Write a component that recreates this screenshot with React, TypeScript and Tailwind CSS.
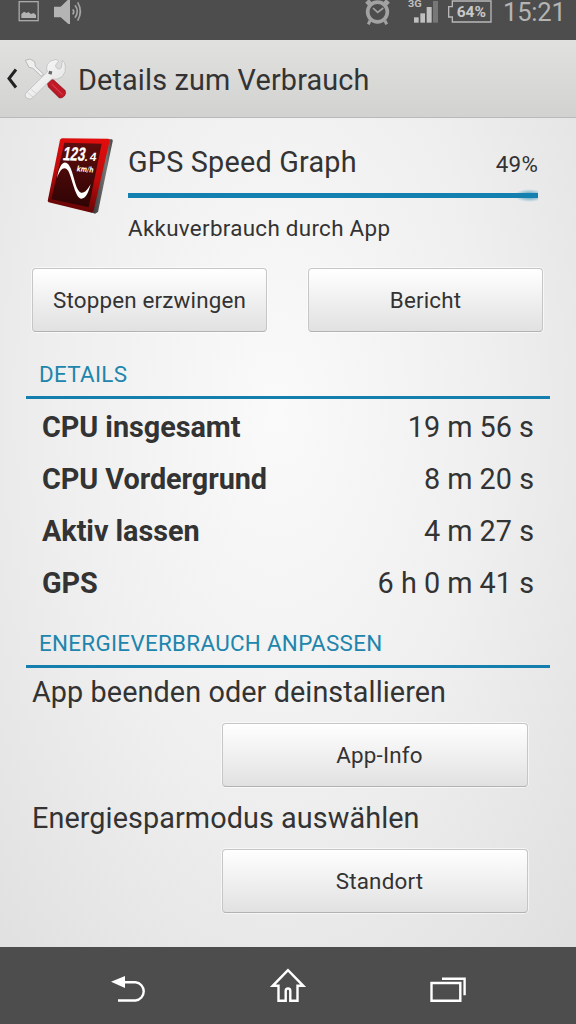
import React from 'react';

const usage = [
  { label: 'CPU insgesamt', value: '19 m 56 s' },
  { label: 'CPU Vordergrund', value: '8 m 20 s' },
  { label: 'Aktiv lassen', value: '4 m 27 s' },
  { label: 'GPS', value: '6 h 0 m 41 s' },
];

const actions = [
  { text: 'App beenden oder deinstallieren', button: 'App-Info' },
  { text: 'Energiesparmodus auswählen', button: 'Standort' },
];

function StatusBar() {
  return (
    <div className="flex h-10 shrink-0 items-start justify-between bg-[#4d4d4d] text-[#b4b4b4]">
      <svg width="100" height="30" viewBox="0 0 300 90">
        <rect x="57.5" y="5" width="57" height="57" fill="none" stroke="#a9a9a9" strokeWidth="4" />
        <path d="M64 54V42l8-7 8 4 5-3 8 6 8-3 7 6v9z" fill="#b4b4b4" />
        <path d="M162 20h20L203 0h7v72h-5l-23-20h-20z" fill="#b4b4b4" />
        <path d="M218 28q7 7 0 15M225 16q14 18 0 37M233 7q16 27 0 55" fill="none" stroke="#a4a4a4" strokeWidth="5" />
      </svg>
      <div className="flex items-start">
        <svg width="140" height="30" viewBox="40 0 420 90">
          <g fill="none" stroke="#a2a2a2">
            <circle cx="83.5" cy="36" r="29.5" strokeWidth="11" />
            <path d="M70 24l14 13 17-13" strokeWidth="5" />
            <path d="M51 13L62 2M116 13L105 2" strokeWidth="13" />
            <path d="M61 62l-5 11M106 62l5 11" strokeWidth="9" />
          </g>
          <g fill="#c0c0c0">
            <rect x="193" y="52" width="14" height="16" />
            <rect x="212" y="40" width="14" height="28" />
            <rect x="231" y="21" width="15" height="47" />
            <rect x="250" y="3" width="15" height="65" fill="#777" />
            <text
              x="175"
              y="20"
              fontSize="28"
              fontWeight="700"
              fontFamily="Roboto, sans-serif"
              textLength="41"
              lengthAdjust="spacingAndGlyphs"
            >
              3G
            </text>
          </g>
          <path d="M308 3h116v63H308V51h-11V20h11z" fill="none" stroke="#b8b8b8" strokeWidth="4" />
          <text
            x="321"
            y="50"
            fill="#c8c8c8"
            fontSize="46"
            fontWeight="700"
            fontFamily="Roboto, sans-serif"
            textLength="88"
            lengthAdjust="spacingAndGlyphs"
          >
            64%
          </text>
        </svg>
        <span className="w-[73px] text-[25.6px] leading-6 tracking-[-0.2px]">15:21</span>
      </div>
    </div>
  );
}

function ToolsIcon() {
  return (
    <svg width="44" height="44" viewBox="72 170 132 132">
      <defs>
        <linearGradient id="steel" x1="0" y1="0" x2="1" y2="1">
          <stop offset="0" stopColor="#fff" />
          <stop offset="1" stopColor="#dedede" />
        </linearGradient>
        <linearGradient id="grip" x1="0" y1="1" x2="1" y2="0">
          <stop offset="0" stopColor="#8c0d16" />
          <stop offset="0.5" stopColor="#c81c2a" />
          <stop offset="1" stopColor="#960f1a" />
        </linearGradient>
      </defs>
      <path d="M76 180l14-4 14 8 2 14 24 23-6 7-25-24-12-3z" fill="#efefef" stroke="#a3a3a3" strokeWidth="2" />
      <path d="M142 249l16-13 37 34q5 8-1 16-7 9-16 7l-33-33z" fill="url(#grip)" stroke="#760b12" strokeWidth="1.5" />
      <path d="M156 252l30 30" stroke="#dd6871" strokeWidth="2" />
      <path
        d="M166 178q-18 2-24 15-4 12 0 22L76 280q-2 9 5 14 8 4 15 0l59-58q18 4 32-7 12-14 9-32-2-12-9-17l-3 22q-5 7-11 3-8-4-6-11l9-12q-4-5-10-4z"
        fill="url(#steel)"
        stroke="#a8a8a8"
        strokeWidth="1.5"
      />
      <path d="M82 276l17 14M92 266l17 14" stroke="#c4c4c4" strokeWidth="2" />
      <rect x="146" y="212" width="10" height="10" fill="#666" transform="rotate(15 151 217)" />
    </svg>
  );
}

function SpeedGraphIcon() {
  return (
    <svg width="68" height="78" viewBox="48 36 204 234">
      <defs>
        <linearGradient id="frame" x1="0.6" y1="0" x2="0.4" y2="1">
          <stop offset="0" stopColor="#e00d0d" />
          <stop offset="0.5" stopColor="#c00b0b" />
          <stop offset="1" stopColor="#5d0505" />
        </linearGradient>
        <linearGradient id="screen" x1="0" y1="0" x2="0" y2="1">
          <stop offset="0" stopColor="#5d0c0c" />
          <stop offset="1" stopColor="#300404" />
        </linearGradient>
        <linearGradient id="side" x1="0" y1="0" x2="1" y2="0">
          <stop offset="0" stopColor="#333" />
          <stop offset="0.7" stopColor="#777" />
          <stop offset="1" stopColor="#444" />
        </linearGradient>
      </defs>
      <path d="M232 42l14 1q3 1 2 6l-44 212-9 5-12-4z" fill="url(#side)" />
      <path d="M95 40l140 1q5 1 4 6l-49 213-5 3L56 232l-3-4L90 44z" fill="url(#frame)" />
      <path d="M103 53l112 3-39 191L64 223z" fill="url(#screen)" />
      <path
        d="M81 160C90 103 111 103 122 130C134 160 138 199 153 203C165 205 174 192 182 177C176 200 168 222 153 221C136 218 128 165 115 138C107 124 92 125 81 160z"
        fill="#fff"
      />
      <g fill="#fff" fontWeight="700">
        <g fontFamily="Liberation Sans, sans-serif">
          <text
            transform="translate(97 105) skewX(-9) rotate(2)"
            fontSize="57"
            stroke="#fff"
            textLength="66"
            lengthAdjust="spacingAndGlyphs"
          >
            123
          </text>
          <text transform="translate(163 107) skewX(-9)" fontSize="34">.</text>
          <text transform="translate(178 109) skewX(-9)" fontSize="36">4</text>
        </g>
        <text
          transform="translate(139 139) skewX(-9) rotate(4)"
          fontSize="23"
          fontFamily="DejaVu Sans, sans-serif"
          textLength="51"
          lengthAdjust="spacingAndGlyphs"
        >
          km/h
        </text>
      </g>
    </svg>
  );
}

function Button({ children, className }: { children: React.ReactNode; className: string }) {
  return (
    <button
      className={`h-16 rounded-[4px] border border-[#c6c6c6] border-b-[#b2b2b2] bg-linear-to-b from-white to-[#e1e1e1] pt-0.5 text-[22.4px] tracking-[0.17px] shadow-[0_0_0_1px_rgba(255,255,255,0.6)] ${className}`}
    >
      {children}
    </button>
  );
}

function SectionTitle({ children }: { children: React.ReactNode }) {
  return (
    <h2 className="mx-[26px] border-b-3 border-[#147fac] pb-[7px] pl-[13px] text-[22.4px] leading-[29px] tracking-[0.3px] text-[#2085ad]">
      {children}
    </h2>
  );
}

function NavBar() {
  return (
    <nav className="flex h-[77px] shrink-0 items-center justify-center bg-[#4d4d4d]">
      <svg width="360" height="77" viewBox="0 0 360 77" fill="none" stroke="#fff" strokeWidth="2.4">
        <path d="M16 35.2h11.5a9.2 9.2 0 0 1 0 18.3h-17.5" />
        <path d="M3 34.8L17 29v12z" fill="#fff" stroke="none" />
        <path d="M180 23.2L164.7 38.8h5.8v14.9h7.2V44q0-2.5 2.3-2.5t2.3 2.5v9.7h7.2V38.8h5.8z" />
        <path d="M323.5 36h28.8v17.7h-28.8zM334 31.7h22.6v16.5" />
      </svg>
    </nav>
  );
}

export default function App() {
  return (
    <div className="flex h-[1024px] w-[576px] flex-col overflow-hidden font-['Roboto',sans-serif] text-[#333]">
      <StatusBar />
      <header className="flex h-[78px] shrink-0 items-center border-b border-[#b9b9b9] bg-linear-to-b from-[#e1e1e0] to-[#d2d2d1]">
        <svg className="ml-1.5" width="12" height="22" viewBox="0 0 12 22">
          <path d="M10 1.5L3 10.5l7 9" fill="none" stroke="#222" strokeWidth="3" />
        </svg>
        <span className="ml-1.5">
          <ToolsIcon />
        </span>
        <h1 className="pt-1 pl-2.5 text-[28.8px] tracking-[0.15px]">Details zum Verbrauch</h1>
      </header>

      <main className="flex min-h-0 flex-1 flex-col bg-[radial-gradient(ellipse_430px_760px_at_48%_35%,#fafafa_0%,#efefef_50%,#dfdfdf_100%)]">
        <section className="flex h-[150px] shrink-0 pt-[19px] pl-[46px]">
          <SpeedGraphIcon />
          <div className="ml-3.5 w-[410px]">
            <div className="flex h-12 items-center justify-between pt-0.5">
              <span className="pt-px text-[28.8px] tracking-[0.2px]">GPS Speed Graph</span>
              <span className="pt-1.5 text-[22.4px] tracking-[0.2px]">49%</span>
            </div>
            <div className="relative mt-2 h-[5px]">
              {/* glow at the tip of the bar */}
              <div className="absolute -top-1 right-0 h-[13px] w-6 bg-[radial-gradient(ellipse_at_65%_50%,#1380b099_20%,transparent_70%)]" />
              <div className="relative h-full bg-[#1380b0]" />
            </div>
            <p className="mt-[15px] text-[22.4px] leading-[30px] tracking-[0.3px]">Akkuverbrauch durch App</p>
          </div>
        </section>

        <div className="flex gap-[41px] pl-8">
          <Button className="w-[235px]">Stoppen erzwingen</Button>
          <Button className="w-[235px]">Bericht</Button>
        </div>

        <div className="h-7 shrink-0" />
        <SectionTitle>DETAILS</SectionTitle>
        <dl className="mt-[3px] pr-[42px] pl-[42px] text-[28.8px]">
          {usage.map((row) => (
            <div key={row.label} className="flex h-[52px] items-center justify-between">
              <dt className="font-bold tracking-[-0.05px]">{row.label}</dt>
              <dd>{row.value}</dd>
            </div>
          ))}
        </dl>

        <div className="h-[19px] shrink-0" />
        <SectionTitle>ENERGIEVERBRAUCH ANPASSEN</SectionTitle>
        <div className="mt-1.5 flex flex-col gap-[13px] pr-12 pl-8">
          {actions.map((action) => (
            <React.Fragment key={action.button}>
              <p className="text-[28.8px] leading-9 tracking-[0.08px]">{action.text}</p>
              <Button className="w-[306px] self-end pr-0 pl-[9px]">{action.button}</Button>
            </React.Fragment>
          ))}
        </div>
      </main>
      <NavBar />
    </div>
  );
}
